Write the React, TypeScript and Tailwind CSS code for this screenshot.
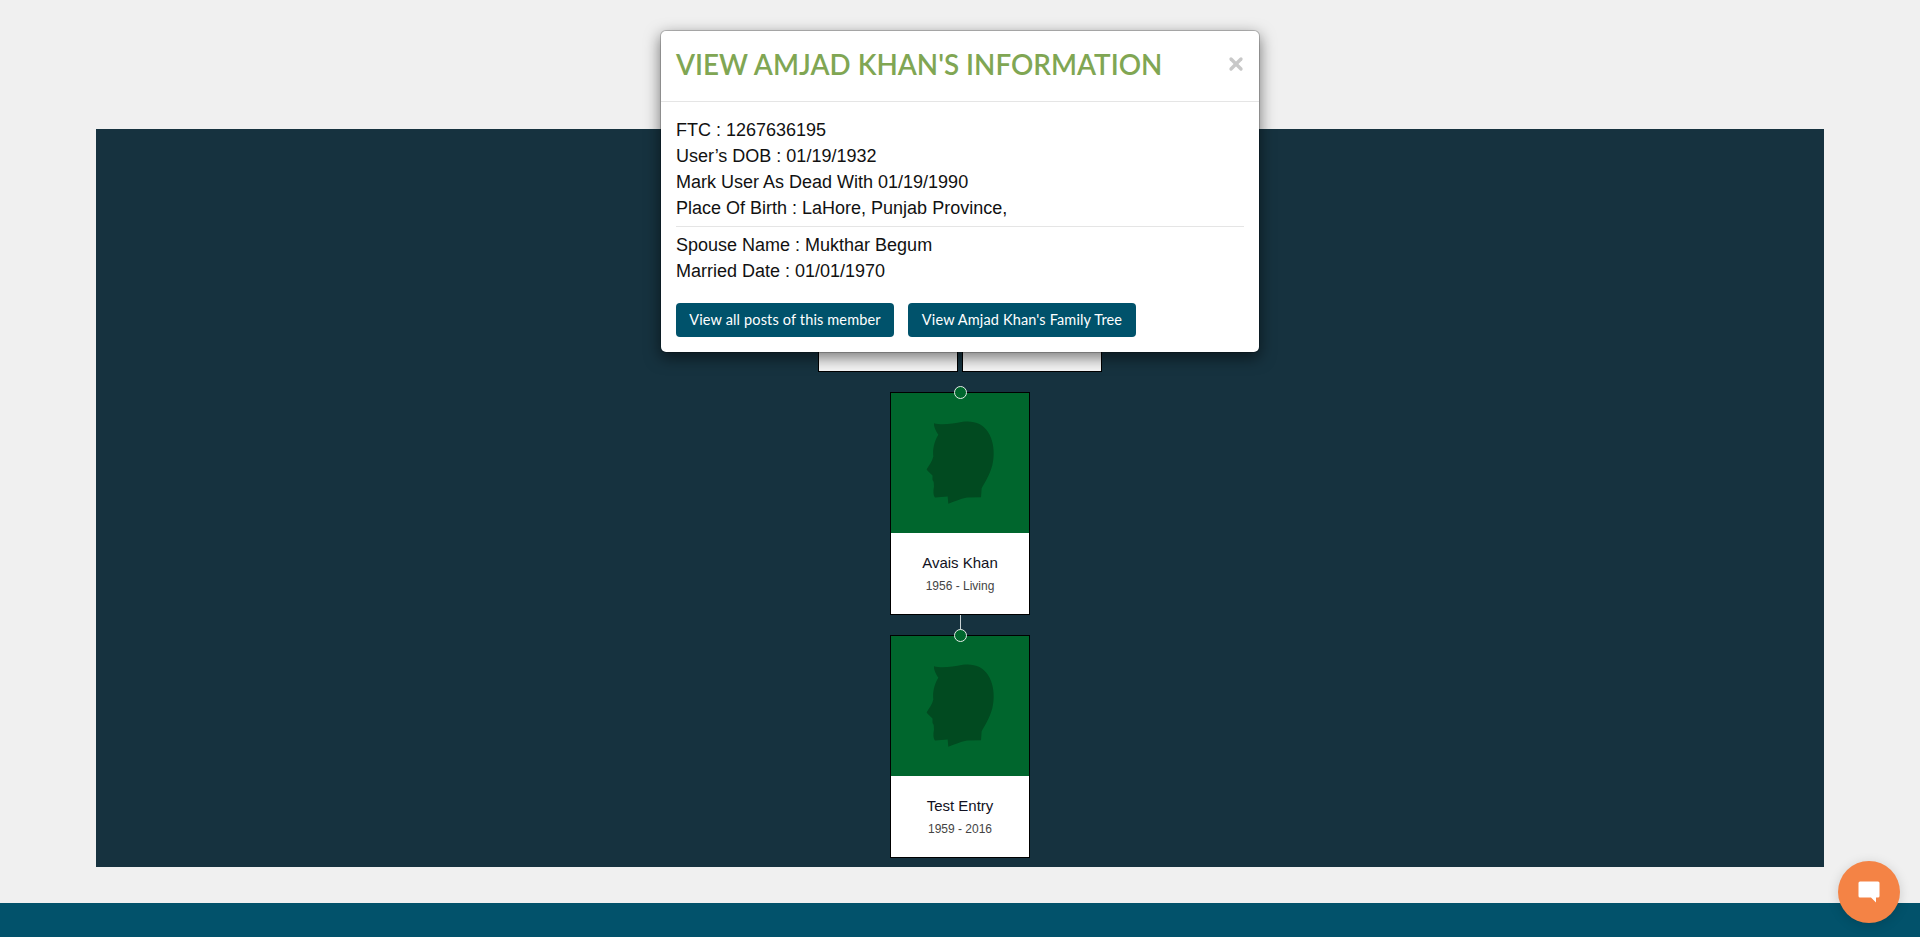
import { X } from 'lucide-react';

const infoLines = [
  'FTC : 1267636195',
  'User’s DOB : 01/19/1932',
  'Mark User As Dead With 01/19/1990',
  'Place Of Birth : LaHore, Punjab Province,',
];

const spouseLines = ['Spouse Name : Mukthar Begum', 'Married Date : 01/01/1970'];

const Silhouette = () => (
  <svg viewBox="0 0 414 419" className="block w-[138px] h-[140px]">
    <path
      fill="#014a20"
      d="M129 90 C150 97 185 92 215 86 C250 82 275 92 290 115 C307 140 311 175 306 205 C302 235 285 262 272 285 L270 312 L228 313 C205 318 190 325 172 332 L170 310 L132 313 C126 305 127 292 129 280 L128 266 C122 258 126 252 124 246 C118 240 108 232 107 228 C114 216 124 205 127 190 C125 170 128 148 142 125 C136 115 128 102 129 90 Z"
    />
  </svg>
);

const MemberCard = ({ name, years }: { name: string; years: string }) => (
  <div className="relative w-[140px] h-[223px] border border-black bg-white">
    <span className="absolute -top-[7px] left-[63px] w-[13px] h-[13px] rounded-full border-[1.5px] border-[#e5ece8] bg-[#00662d]" />
    <div className="bg-[#00662d]">
      <Silhouette />
    </div>
    <div className="flex flex-col items-center pt-[20px]">
      <span className="text-[15px] leading-[20px] text-[#111122]">{name}</span>
      <span className="mt-[5px] text-[12px] leading-[16px] text-[#444]">{years}</span>
    </div>
  </div>
);

export default function App() {
  return (
    <div className="relative h-[937px] overflow-hidden bg-[#f0f0f0] flex flex-col font-['Liberation_Sans',sans-serif]">
      <div className="mt-[129px] mx-[96px] h-[738px] bg-[#16323f] flex flex-col items-center pt-[21px]">
        <div className="flex gap-[4px]">
          <div className="w-[140px] h-[222px] border border-black bg-[#f6f6f6]" />
          <div className="w-[140px] h-[222px] border border-black bg-[#f6f6f6]" />
        </div>
        <div className="mt-[20px]">
          <MemberCard name="Avais Khan" years="1956 - Living" />
        </div>
        <div className="w-px h-[20px] bg-[#c9d2d4]" />
        <MemberCard name="Test Entry" years="1959 - 2016" />
      </div>
      <div className="mt-[36px] flex-1 bg-[#02526b]" />

      {/* modal */}
      <div className="absolute top-[30px] left-[660px] w-[600px] rounded-[6px] border border-black/20 bg-white bg-clip-padding shadow-[0_5px_15px_rgba(0,0,0,0.5)]">
        <div className="flex items-center justify-between border-b border-[#e5e5e5] px-[15px] pt-[14px] pb-[16px] h-[71px]">
          <h4 className="font-['Lato',sans-serif] text-[27.8px] leading-[40px] font-semibold text-[#80a653]">
            VIEW AMJAD KHAN'S INFORMATION
          </h4>
          <X size={20} strokeWidth={4} className="text-[#c8c8c8] -mr-[2px] -mt-[2px]" />
        </div>
        <div className="p-[15px] text-[18px] leading-[26px] text-[#111]">
          {infoLines.map((line) => (
            <p key={line}>{line}</p>
          ))}
          <hr className="my-[5px] border-[#e5e5e5]" />
          {spouseLines.map((line) => (
            <p key={line}>{line}</p>
          ))}
          <div className="mt-[19px] flex gap-[14px] font-['Lato',sans-serif] text-[14.5px] leading-[20px] tracking-[0.15px] text-white">
            <button className="h-[34px] w-[218px] rounded-[4px] bg-[#00526b]">View all posts of this member</button>
            <button className="h-[34px] w-[228px] rounded-[4px] bg-[#00526b]">View Amjad Khan's Family Tree</button>
          </div>
        </div>
      </div>

      {/* chat bubble */}
      <button className="absolute left-[1838px] top-[861px] w-[62px] h-[62px] rounded-full bg-[#f48345] shadow-[0_2px_12px_rgba(0,0,0,0.15)] flex items-center justify-center">
        <svg viewBox="0 0 22 22" className="w-[22px] h-[22px]">
          <path fill="#fff" d="M2 0.5 H20 A1.5 1.5 0 0 1 21.500 2 V15 A1.5 1.5 0 0 1 20 16.500 H18 V21.500 L13 16.500 H2 A1.5 1.500 0 0 1 0.5 15 V2 A1.5 1.5 0 0 1 2 0.5 Z" />
        </svg>
      </button>
    </div>
  );
}
